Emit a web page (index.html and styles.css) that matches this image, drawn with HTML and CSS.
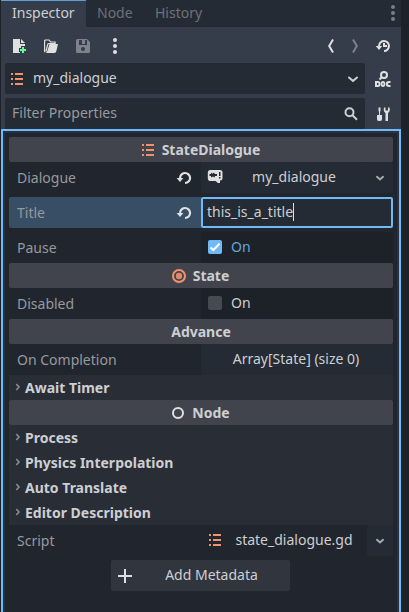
FILE: index.html
```html
<!DOCTYPE html>
<html lang="en">
<head>
<meta charset="utf-8">
<title>Inspector</title>
<link rel="stylesheet" href="styles.css">
</head>
<body>
<svg class="defs" width="0" height="0">
  <symbol id="list" viewBox="0 0 16 16"><path d="M2 2h2v2H2zM6 2h8v2H6zM2 7h2v2H2zM6 7h8v2H6zM2 12h2v2H2zM6 12h8v2H6z" fill="#f0936b"/></symbol>
  <symbol id="reload" viewBox="0 0 16 16"><path d="M4.1 8.500A5 5 0 1 1 9 13" fill="none" stroke="currentColor" stroke-width="2.200"/><path d="M.6 8h6.800L4 12z" fill="currentColor"/></symbol>
  <symbol id="down" viewBox="0 0 16 16"><path d="M4 6.500l4 3.600 4-3.600" fill="none" stroke="currentColor" stroke-width="2" stroke-linecap="round" stroke-linejoin="round"/></symbol>
  <symbol id="drop" viewBox="0 0 16 16"><path d="M5 6.800l3 2.700 3-2.700" fill="none" stroke="currentColor" stroke-width="2" stroke-linecap="round"/></symbol>
  <symbol id="arrow" viewBox="0 0 8 8"><path d="M2.300 1L5 4 2.300 7" fill="none" stroke="#868a90" stroke-width="1.700"/></symbol>
  <symbol id="dots" viewBox="0 0 16 16"><circle cx="8" cy="2" r="2"/><circle cx="8" cy="8" r="2"/><circle cx="8" cy="14" r="2"/></symbol>
</svg>
<div class="dock">
  <div class="tabs">
    <div class="tab active">Inspector</div><div class="tab node">Node</div><div class="tab">History</div>
    <svg class="tab-menu" width="16" height="16"><use href="#dots"/></svg>
  </div>
  <div class="toolbar">
    <svg width="16" height="16" viewBox="0 0 16 16"><path d="M2 1h7v5h5v2h-4v2H8v4h1v1H2zM10 1l4 4h-4z" fill="#e0e0e0"/><path d="M11 9h2v2h2v2h-2v2h-2v-2H9v-2h2z" fill="#5fff97"/></svg>
    <svg width="16" height="16" viewBox="0 0 16 16"><path d="M2 14a1 1 0 0 1-.4-1V3a1 1 0 0 1 1-1h3.500l1.500 2h4.500v1.500H6Q5 5.500 4.700 6.500L3 13.500" fill="none" stroke="#e0e0e0" stroke-width="1.200"/><path d="M6.500 6H15l-1.700 7.300Q13 15 11.500 15H2.500Q4 14.600 4.300 13z" fill="#e0e0e0"/></svg>
    <svg class="dim" width="16" height="16" viewBox="0 0 16 16"><path fill-rule="evenodd" d="M2.500 1H12l3 3v9.500q0 1.500-1.500 1.500h-11Q1 15 1 13.500v-11Q1 1 2.500 1zM4 2v5h8V2h-2v4H7V2zM8 9a2 2 0 1 0 0 4 2 2 0 0 0 0-4z" fill="currentColor"/></svg>
    <svg width="16" height="16" viewBox="0 0 16 16" fill="#e0e0e0"><use href="#dots"/></svg>
    <span class="space"></span>
    <svg width="8" height="16" viewBox="0 0 8 16"><path d="M6 1.500L2.200 8 6 14.500" fill="none" stroke="#e0e0e0" stroke-width="2"/></svg>
    <svg width="8" height="16" viewBox="0 0 8 16"><path d="M2 1.500L5.800 8 2 14.500" fill="none" stroke="#7e828b" stroke-width="2"/></svg>
    <svg width="16" height="16" viewBox="0 0 16 16"><path d="M4 8.500A5 5 0 1 1 9 13" fill="none" stroke="#e0e0e0" stroke-width="2"/><path d="M.7 8h6.500L4 12zM8 5h2v2h2v2H8z" fill="#e0e0e0"/></svg>
  </div>
  <div class="bar">
    <div class="field object"><svg width="16" height="16"><use href="#list"/></svg><span>my_dialogue</span><svg class="end" width="16" height="16"><use href="#down"/></svg></div>
    <svg width="16" height="16" viewBox="0 0 16 16"><circle cx="9" cy="4" r="3" fill="none" stroke="#e0e0e0" stroke-width="2"/><path d="M7 6L4.500 8.500" stroke="#e0e0e0" stroke-width="2"/><path fill="#e0e0e0" fill-rule="evenodd" d="M0 10h3q2.500 0 2.500 3T3 16H0zM2 12v2h1q.6 0 .6-1T3 12zM8 10q2.300 0 2.300 3T8 16t-2.300-3T8 10zM8 12q-.6 0-.6 1t.6 1 .6-1-.6-1zM15.500 10v2H14q-1 0-1 1t1 1h1.500v2H14q-3.200 0-3.200-3t3.200-3z"/></svg>
  </div>
  <div class="bar">
    <div class="field filter"><span>Filter Properties</span><svg class="end" width="16" height="16" viewBox="0 0 16 16"><circle cx="6.500" cy="6.200" r="4" fill="none" stroke="#cdcfd2" stroke-width="2"/><path d="M9.500 9.200l4.500 4.500" stroke="#cdcfd2" stroke-width="2"/></svg></div>
    <svg width="16" height="16" viewBox="0 0 16 16"><path d="M3.500 1.500h2v3L5 6v3h2v4.500q0 1.500-2.500 1.500T2 13.500V9h2V6l-.5-1.500zM9 1.500q-1 4 1.500 5.500v8h2.500V7q2.500-1.500 1.500-5.500H13V4.500h-2.500v-3z" fill="#e0e0e0"/></svg>
  </div>
  <div class="inspector"><div class="content">
    <div class="category"><svg width="16" height="16"><use href="#list"/></svg>StateDialogue</div>
    <div class="row"><div class="name">Dialogue<svg width="16" height="16"><use href="#reload"/></svg></div>
      <div class="value resource"><svg width="16" height="16" viewBox="0 0 16 16"><path d="M3 1h10q2.500 0 2.500 2.500v5.500q0 2.500-2.500 2.500v2.500h-2L8.500 12H3Q.8 12 .8 9V3.500Q.8 1 3 1z" fill="#e0e0e0"/><path d="M4 3.500l1.500 1.200L7 3.500l.8 1.500H10v2H8l-.5 1.500L6 7.500l-2 1V7H2.500V5H4zM12 3h1.500v4H12zM12 8h1.500v1.500H12z" fill="#252b34"/></svg><span>my_dialogue</span></div><div class="picker"><svg width="16" height="16"><use href="#drop"/></svg></div></div>
    <div class="row selected gap"><div class="name">Title<svg width="16" height="16"><use href="#reload"/></svg></div><div class="value edit">this_is_a_title<i class="caret"></i></div></div>
    <div class="row gap"><div class="name">Pause</div><div class="value check on"><svg width="14" height="14" viewBox="0 0 14 14"><rect width="14" height="14" rx="2" fill="#70bafa"/><path d="M2.500 7.500L5.300 10 11.500 3.800" fill="none" stroke="#fff" stroke-width="2"/></svg>On</div></div>
    <div class="category"><svg width="16" height="16" viewBox="0 0 16 16"><circle cx="8" cy="8" r="6" fill="none" stroke="#f0936b" stroke-width="2"/><circle cx="8" cy="8" r="3.200" fill="#df8a67"/></svg>State</div>
    <div class="row"><div class="name">Disabled</div><div class="value check"><svg width="14" height="14"><rect width="14" height="14" rx="2" fill="#464a53"/></svg>On</div></div>
    <div class="category">Advance</div>
    <div class="row"><div class="name">On Completion</div><div class="value array">Array[State] (size 0)</div></div>
    <div class="group"><svg width="8" height="8"><use href="#arrow"/></svg>Await Timer</div>
    <div class="category"><svg width="16" height="16" viewBox="0 0 16 16"><circle cx="8" cy="8" r="5" fill="none" stroke="#e0e0e0" stroke-width="2"/></svg>Node</div>
    <div class="group"><svg width="8" height="8"><use href="#arrow"/></svg>Process</div>
    <div class="group"><svg width="8" height="8"><use href="#arrow"/></svg>Physics Interpolation</div>
    <div class="group"><svg width="8" height="8"><use href="#arrow"/></svg>Auto Translate</div>
    <div class="group"><svg width="8" height="8"><use href="#arrow"/></svg>Editor Description</div>
    <div class="row"><div class="name">Script</div><div class="value resource plain"><svg width="16" height="16"><use href="#list"/></svg><span>state_dialogue.gd</span></div><div class="picker"><svg width="16" height="16"><use href="#drop"/></svg></div></div>
    <div class="add"><svg width="16" height="16" viewBox="0 0 16 16"><path d="M8 1v14M1 8h14" stroke="#e0e0e0" stroke-width="2"/></svg><span>Add Metadata</span></div>
  </div></div>
</div>
</body>
</html>
```
FILE: styles.css
```css
* { box-sizing: border-box; }
body {
  margin: 0;
  height: 612px;
  overflow: hidden;
  background: #1d2229;
  color: #cdcfd2;
  font: 14px/20px "Noto Sans", sans-serif;
  white-space: nowrap;
}
svg { display: block; flex: none; }
.defs { position: absolute; }
.dock { width: 400px; height: 612px; margin-left: 1px; background: #363d4a; display: flex; flex-direction: column; }
.tabs { display: flex; height: 27px; flex: none; background: #252b34; color: #6d7178; }
.tab { padding: 3px 11px 0; }
.tab.active { width: 85px; background: #363d4a; color: #cdcfd2; border-top: 1px solid #5f9dd3; padding-top: 2px; }
.tab.node { width: 58px; }
.tab-menu { margin: 5px 0 0 auto; fill: #7a7d83; }
.toolbar { display: flex; align-items: center; height: 36px; flex: none; padding: 2px 10px 0; gap: 16px; }
.dim { color: #7e828b; }
.space { flex: 1; }
.bar { display: flex; align-items: center; flex: none; height: 31px; margin-bottom: 4px; padding-left: 4px; gap: 10px; }
.field { display: flex; align-items: center; width: 360px; height: 31px; background: #252b34; border-radius: 2px; }
.object { padding: 0 4px; }
.object span { margin-left: 8px; padding-bottom: 1px; }
.end { margin-left: auto; }
.filter { padding: 0 6px 0 7px; color: #97999d; }
.filter span { padding-bottom: 1px; }
.inspector { flex: 1; margin-top: -4px; border: solid #70bafa; border-width: 2px 2px 0; padding: 2px 2px 0; background: #2b313c; z-index: 1; }
.content { height: 100%; background: #21262e; padding: 4px 4px 0; }
.category { display: flex; align-items: center; justify-content: center; gap: 6px; height: 25px; background: #41444c; border-radius: 2px; font-weight: 700; }
.category svg { margin-left: -2px; }
.row { display: flex; height: 31px; }
.gap { margin-top: 4px; }
.name { display: flex; align-items: center; justify-content: space-between; width: 192px; padding: 0 9px 0 8px; color: #97999d; }
.name svg { color: #e0e0e0; }
.selected .name { background: #374e65; border-radius: 2px 0 0 2px; }
.value { display: flex; align-items: center; flex: 1; background: #1d2229; }
.resource { background: #252b34; padding: 0 3px 1px 6px; }
.resource.plain { background: none; }
.resource span { flex: 1; text-align: center; padding-left: 1px; }
.picker { width: 26px; background: #252b34; color: #a7a9ad; border-radius: 2px; display: flex; align-items: center; justify-content: center; }
.edit { border: 2px solid #70bafa; border-radius: 2px; background: #252b34; padding: 0 4px 2px; }
.caret { width: 1px; height: 18px; background: #e0e0e0; }
.check { padding: 0 7px 1px; gap: 9px; }
.on { color: #65a5dc; }
.array { justify-content: center; background: #252b34; padding: 0 2px 1px 0; }
.group { display: flex; align-items: center; gap: 3px; height: 25px; padding-left: 5px; background: #292d36; font-weight: 700; }
.group svg { margin-bottom: 1px; }
.add { display: flex; align-items: center; width: 179px; height: 31px; margin: 4px auto 0 102px; padding: 0 6px; background: #31353e; border-radius: 2px; }
.add span { flex: 1; text-align: center; padding: 0 0 1px 6px; }
```
